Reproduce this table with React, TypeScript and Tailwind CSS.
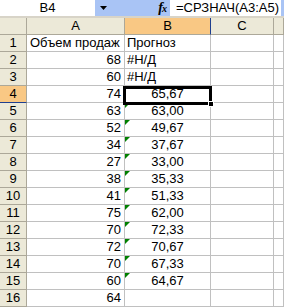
import React from "react";

const colA = ["68", "60", "74", "63", "52", "34", "27", "38", "41", "75", "70", "72", "70", "60", "64"];
const colB = ["#Н/Д", "#Н/Д", "65,67", "63,00", "49,67", "37,67", "33,00", "35,33", "51,33", "62,00", "72,33", "70,67", "67,33", "64,67", ""];

function Triangle() {
  return (
    <svg className="absolute left-0 top-0" width="5" height="5" viewBox="0 0 5 5">
      <polygon points="0,0 5,0 0,5" fill="#008000" />
    </svg>
  );
}

export default function App() {
  const cell = "h-[17px] border-r border-b border-[#c0c0c0] text-[13px] leading-[16px] text-black whitespace-nowrap overflow-hidden relative";
  const head = "h-[17px] border-r border-b border-[#aca899] bg-[#ece9d8] text-[13px] leading-[16px] text-black text-center";
  return (
    <div className="w-[284px] h-[308px] overflow-hidden bg-white relative [font-family:'Liberation_Sans',Arial,sans-serif]">
      {/* formula bar */}
      <div className="flex h-[16px] items-stretch">
        <div className="w-[95px] bg-white text-[13px] leading-[16px] text-center">B4</div>
        <div className="w-[75px] bg-[#a9c4f5] flex items-center justify-between pl-[5px] pr-[4px]">
          <svg width="7" height="4" viewBox="0 0 7 4">
            <polygon points="0,0 7,0 3.5,4" fill="#000" />
          </svg>
          <span className="[font-family:'Liberation_Serif',serif] italic text-[14px] leading-[16px] font-bold tracking-[-1px]">
            f<span className="text-[10px]">x</span>
          </span>
        </div>
        <div className="flex-1 bg-white text-[13px] leading-[16px] pl-[6px] whitespace-nowrap">=СРЗНАЧ(A3:A5)</div>
        <div className="w-[3px] bg-[#a9c4f5]" />
      </div>
      <div className="h-[2px] bg-[#d8d4c8]" />

      {/* sheet grid */}
      <div className="grid grid-cols-[27px_98px_86px_63px_1fr]">
        <div className={head} />
        <div className={head}>A</div>
        <div className={`${head} bg-[#f9c884] border-r-[#1f3f8f]`}>B</div>
        <div className={head}>C</div>
        <div className={head} />

        <div className={head}>1</div>
        <div className={`${cell} pl-[3px]`}>Объем продаж</div>
        <div className={`${cell} pl-[2px]`}>Прогноз</div>
        <div className={cell} />
        <div className={cell} />

        {colA.map((a, i) => {
          const r = i + 2;
          const b = colB[i];
          const na = b.startsWith("#");
          return (
            <React.Fragment key={r}>
              <div className={`${head} ${r === 4 ? "bg-[#f9c884] border-b-[#1f3f8f]" : ""}`}>{r}</div>
              <div className={`${cell} text-right pr-[3px]`}>{a}</div>
              <div className={`${cell} ${na ? "pl-[2px]" : "text-center"}`}>
                {r >= 5 && r <= 15 ? <Triangle /> : null}
                {b}
              </div>
              <div className={cell} />
              <div className={cell} />
            </React.Fragment>
          );
        })}
      </div>

      {/* active cell frame with fill handle */}
      <div className="absolute left-[123px] top-[86px] w-[89px] h-[19px] border-[3px] border-black pointer-events-none" />
      <div className="absolute left-[208px] top-[101px] w-[6px] h-[6px] bg-black border border-white" />
    </div>
  );
}
